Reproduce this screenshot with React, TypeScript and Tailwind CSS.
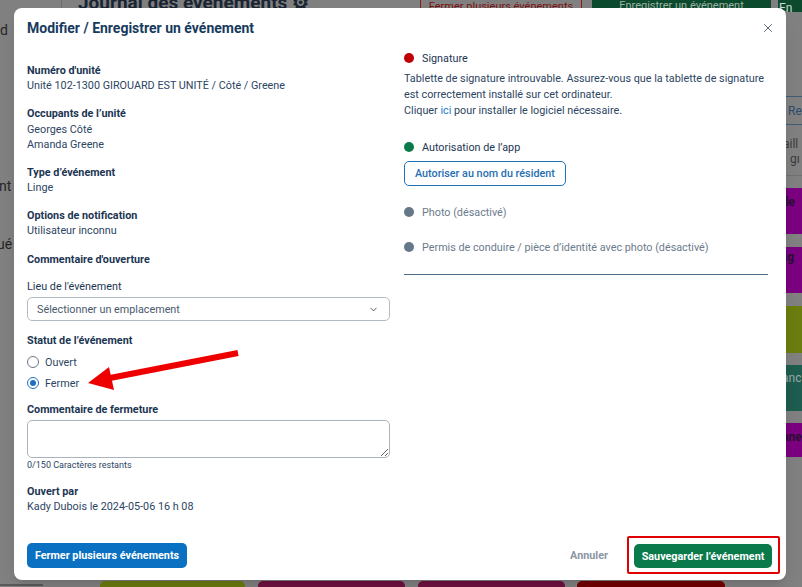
import { X, ChevronDown } from "lucide-react";

const Field = ({ label, children, className = "" }: { label: string; children?: React.ReactNode; className?: string }) => (
  <div className={className}>
    <div className="font-bold text-[#1c3553]">{label}</div>
    {children && <div className="text-[#2c4563]">{children}</div>}
  </div>
);

const Dot = ({ color }: { color: string }) => (
  <span className={`inline-block w-[10px] h-[10px] rounded-full mr-[8px] ${color}`} />
);

const App = () => {
  return (
    <div className="relative w-[802px] h-[587px] overflow-hidden bg-[#808080] font-[Roboto,sans-serif]">
      {/* Page behind the dimmed overlay */}
      <div className="flex flex-col h-full">
        <div className="flex items-start h-[12px] shrink-0">
          <div className="w-[62px] h-full border-r border-[#6e6e6e]" />
          <div className="w-[358px] pl-[16px] -mt-[8px] text-[19px] leading-[22px] font-bold text-[#1a2533] whitespace-nowrap">
            Journal des événements ⚙
          </div>
          <div className="w-[162px] h-[12px] border border-[#8a1515] rounded-[3px] -mt-[2px] text-[11px] leading-[16px] text-[#7a1010] text-center overflow-hidden whitespace-nowrap">
            Fermer plusieurs événements
          </div>
          <div className="ml-[10px] w-[179px] h-[14px] -mt-[2px] bg-[#0b4a2c] rounded-[3px] text-[11px] leading-[16px] text-[#9fb0a6] text-center overflow-hidden whitespace-nowrap">
            Enregistrer un événement
          </div>
          <div className="ml-[7px] flex-1 h-[14px] -mt-[2px] bg-[#0b4a2c] text-[12px] leading-[20px] text-[#cfd8d2] pl-[1px] overflow-hidden">
            En
          </div>
        </div>

        <div className="flex flex-1 justify-between">
          <div className="w-[14px] text-[14px] leading-[16px] text-[#262626] overflow-hidden whitespace-nowrap">
            <div className="mt-[10px]">d</div>
            <div className="mt-[140px] -ml-[1px]">nt</div>
            <div className="mt-[42px] -ml-[3px]">ué</div>
          </div>

          <div className="w-[16px] flex flex-col text-[12px] leading-[16px] overflow-hidden whitespace-nowrap">
            <div className="mt-[84px] h-[29px] border-y border-[#3e5a76] flex items-center text-[#2d4a6a] pl-[2px]">Re</div>
            <div className="h-[51px] border-b border-[#707070] text-[#3a3a3a] pt-[12px] leading-[15px]">
              <div className="-ml-[3px]">aill</div>
              <div className="pl-[4px]">gı</div>
            </div>
            <div className="mt-[12px] h-[46px] bg-[#7b0080] font-bold text-[#2a1030] pt-[6px]">
              <span className="-ml-[4px] inline-block">lle</span>
            </div>
            <div className="mt-[13px] h-[46px] bg-[#7b0080] font-bold text-[#2a1030] pt-[2px]">
              <span className="-ml-[2px] inline-block">ig</span>
            </div>
            <div className="mt-[13px] h-[47px] bg-[#6b7d0e]" />
            <div className="mt-[12px] h-[46px] bg-[#1e5c4f] text-[#9aa8a4] pt-[5px]">
              <span className="-ml-[4px] inline-block">anc</span>
            </div>
            <div className="mt-[12px] h-[34px] bg-[#7b0080] font-bold text-[#2a1030] pt-[6px]">
              <span className="-ml-[4px] inline-block">ane</span>
            </div>
          </div>
        </div>

        <div className="flex items-end h-[7px] shrink-0">
          <div className="w-[43px] h-[2px] bg-[#5a5a5a] mb-[1px]" />
          <div className="ml-[57px] w-[145px] h-[6px] rounded-t-[5px] bg-[#6b7a0f]" />
          <div className="ml-[13px] w-[147px] h-[6px] rounded-t-[5px] bg-[#6e1140]" />
          <div className="ml-[13px] w-[147px] h-[6px] rounded-t-[5px] bg-[#6e1140]" />
          <div className="ml-[12px] w-[148px] h-[6px] rounded-t-[5px] bg-[#720000]" />
        </div>
      </div>

      {/* Modal */}
      <div className="absolute left-[14px] top-[8px] w-[772px] h-[572px] bg-white rounded-[8px] shadow-lg flex flex-col text-[10.8px] leading-[15px]">
        <div className="flex items-center justify-between h-[20px] mt-[10px] pl-[13px] pr-[11px]">
          <h2 className="text-[14px] font-bold text-[#173a5e]">Modifier / Enregistrer un événement</h2>
          <X size={14} strokeWidth={1.6} className="text-[#4d5b69]" />
        </div>

        <div className="grid grid-cols-[363px_364px] gap-x-[14px] pl-[13px] mt-[12px]">
          {/* Left column */}
          <div className="pt-[13px]">
            <Field label="Numéro d'unité">Unité 102-1300 GIROUARD EST UNITÉ / Côté / Greene</Field>
            <Field label="Occupants de l’unité" className="mt-[13px]">
              <div className="mt-[1px]">Georges Côté</div>
              <div>Amanda Greene</div>
            </Field>
            <Field label="Type d’événement" className="mt-[13px]">Linge</Field>
            <Field label="Options de notification" className="mt-[13px]">Utilisateur inconnu</Field>
            <Field label="Commentaire d'ouverture" className="mt-[14px]" />

            <div className="mt-[12px] text-[#1c3553]">Lieu de l'événement</div>
            <div className="mt-[3px] h-[24px] border border-[#b3bcc6] rounded-[5px] flex items-center justify-between pl-[9px] pr-[10px] text-[#4a5a6c]">
              <span>Sélectionner un emplacement</span>
              <ChevronDown size={11} strokeWidth={2} className="text-[#44505c]" />
            </div>

            <div className="mt-[12px] font-bold text-[#1c3553]">Statut de l’événement</div>
            <div className="mt-[4px] flex flex-col gap-[1px] text-[#2c4563]">
              <label className="h-[20px] flex items-center">
                <span className="w-[12px] h-[12px] rounded-full border-[1.5px] border-[#6b7684] mr-[6px]" />
                Ouvert
              </label>
              <label className="h-[20px] flex items-center">
                <span className="w-[12px] h-[12px] rounded-full border-[1.5px] border-[#1f6fc0] mr-[6px] flex items-center justify-center">
                  <span className="w-[6px] h-[6px] rounded-full bg-[#1f6fc0]" />
                </span>
                Fermer
              </label>
            </div>

            <div className="mt-[9px] font-bold text-[#1c3553]">Commentaire de fermeture</div>
            <textarea className="mt-[3px] block w-full h-[38px] border border-[#a9b3be] rounded-[5px] resize-y outline-none" />
            <div className="mt-[1px] text-[9px] leading-[12px] text-[#2c4563]">0/150 Caractères restants</div>

            <Field label="Ouvert par" className="mt-[13px]">Kady Dubois le 2024-05-06 16 h 08</Field>
          </div>

          {/* Right column */}
          <div className="text-[#2c4563]">
            <div className="h-[16px] flex items-center">
              <Dot color="bg-[#c00000]" />
              <span className="text-[#1c3553]">Signature</span>
            </div>
            <div className="mt-[5px] leading-[16px] whitespace-nowrap">
              <div>Tablette de signature introuvable. Assurez-vous que la tablette de signature</div>
              <div>est correctement installé sur cet ordinateur.</div>
              <div>
                Cliquer <span className="text-[#1a78c8]">ici</span> pour installer le logiciel nécessaire.
              </div>
            </div>

            <div className="mt-[20px] h-[16px] flex items-center">
              <Dot color="bg-[#0b7a4b]" />
              <span className="text-[#1c3553]">Autorisation de l’app</span>
            </div>
            <button className="mt-[6px] h-[25px] px-[10px] border border-[#1f72b8] rounded-[5px] text-[#1f6fb2] font-medium whitespace-nowrap">
              Autoriser au nom du résident
            </button>

            <div className="mt-[18px] h-[16px] flex items-center text-[#6b7b8c]">
              <Dot color="bg-[#657889]" />
              Photo (désactivé)
            </div>
            <div className="mt-[19px] h-[16px] flex items-center text-[#6b7b8c]">
              <Dot color="bg-[#657889]" />
              Permis de conduire / pièce d’identité avec photo (désactivé)
            </div>
            <div className="mt-[19px] border-b border-[#4a6b8c]" />
          </div>
        </div>

        {/* Footer */}
        <div className="mt-auto flex items-center justify-between pl-[13px] pr-[6px] pb-[6px]">
          <button className="w-[160px] h-[25px] bg-[#0a70c2] rounded-[5px] text-white font-bold whitespace-nowrap">
            Fermer plusieurs événements
          </button>
          <div className="flex items-center">
            <span className="mr-[19px] font-bold text-[#8c96a3]">Annuler</span>
            <div className="border-2 border-[#e00000] rounded-[2px] pl-[5px] pr-[6px] pt-[6px] pb-[4px]">
              <button className="w-[138px] h-[24px] bg-[#0b7a4b] rounded-[5px] text-white font-bold whitespace-nowrap">
                Sauvegarder l’événement
              </button>
            </div>
          </div>
        </div>
      </div>

      {/* Red annotation arrow */}
      <svg className="absolute inset-0 pointer-events-none" width="802" height="587" viewBox="0 0 802 587">
        <line x1="238" y1="353" x2="110" y2="378" stroke="#ee0000" strokeWidth="6" />
        <polygon points="88,383 114,390 109,367" fill="#ee0000" />
      </svg>
    </div>
  );
};

export default App;
